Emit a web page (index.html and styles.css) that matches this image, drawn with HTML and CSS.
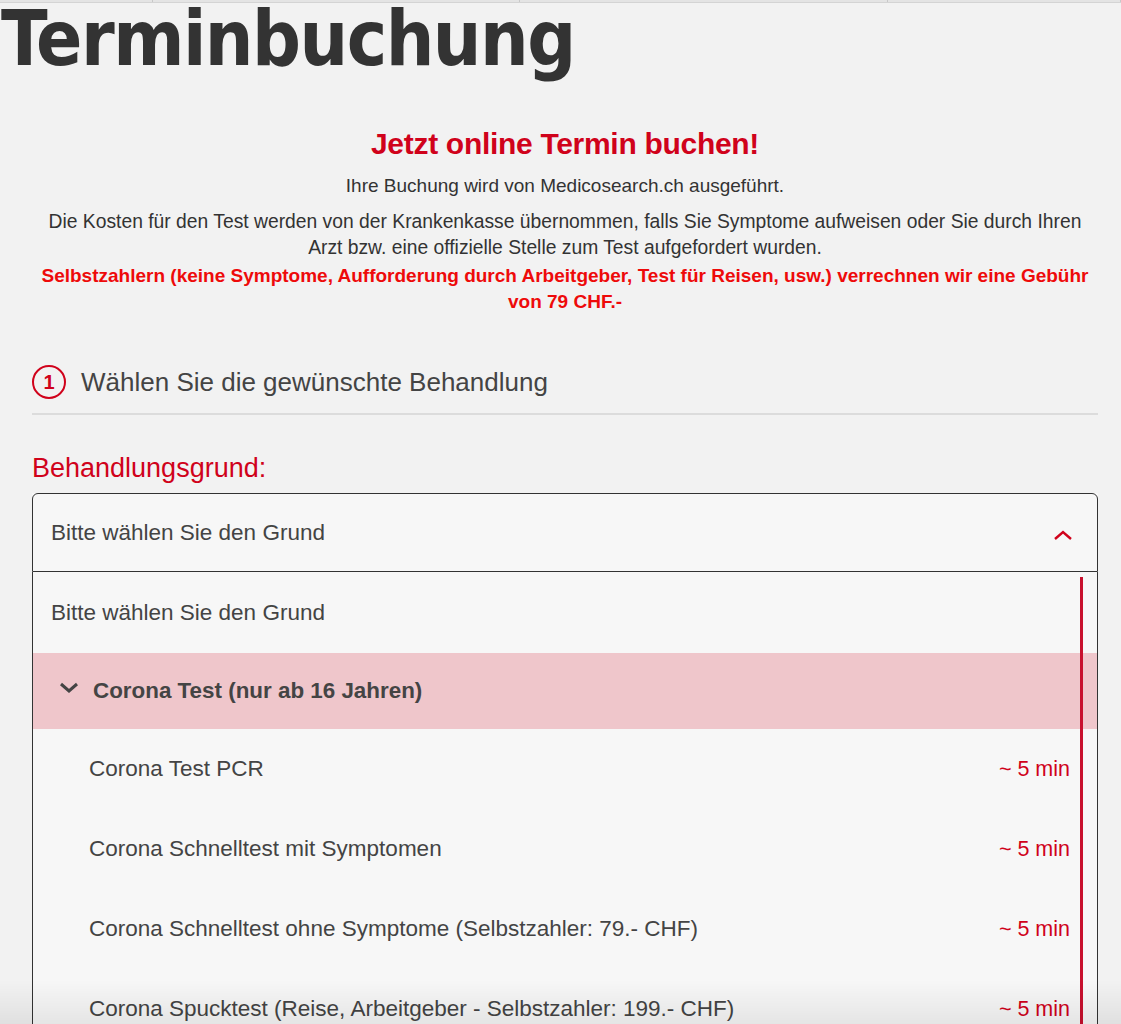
FILE: index.html
```html
<!DOCTYPE html>
<html lang="de">
<head>
<meta charset="utf-8">
<title>Terminbuchung</title>
<link rel="stylesheet" href="styles.css">
</head>
<body>
<div class="topstrip"><span></span><span></span><span></span><span></span></div>
<h1 class="title">Terminbuchung</h1>
<main class="content">
  <section class="intro">
    <h2 class="intro-head">Jetzt online Termin buchen!</h2>
    <p class="intro-line">Ihre Buchung wird von Medicosearch.ch ausgeführt.</p>
    <p class="intro-text">Die Kosten für den Test werden von der Krankenkasse übernommen, falls Sie Symptome aufweisen oder Sie durch Ihren Arzt bzw. eine offizielle Stelle zum Test aufgefordert wurden.<br><strong class="intro-warn">Selbstzahlern (keine Symptome, Aufforderung durch Arbeitgeber, Test für Reisen, usw.) verrechnen wir eine Gebühr von 79 CHF.-</strong></p>
  </section>
  <div class="step">
    <span class="step-num">1</span>
    <span class="step-title">Wählen Sie die gewünschte Behandlung</span>
  </div>
  <label class="field-label">Behandlungsgrund:</label>
  <div class="select">
    <div class="select-head">
      <span>Bitte wählen Sie den Grund</span>
      <svg class="chev-up" width="20" height="12" viewBox="0 0 20 12"><path d="M2 10 L10 3 L18 10" fill="none" stroke="#d0021b" stroke-width="2.4"/></svg>
    </div>
    <div class="dropdown">
      <div class="opt first">Bitte wählen Sie den Grund</div>
      <div class="opt group">
        <svg class="chev-down" width="20" height="12" viewBox="0 0 20 12"><path d="M2 2 L10 9 L18 2" fill="none" stroke="#444" stroke-width="3"/></svg>
        <span>Corona Test (nur ab 16 Jahren)</span>
      </div>
      <div class="opt item"><span>Corona Test PCR</span><span class="dur">~ 5 min</span></div>
      <div class="opt item"><span>Corona Schnelltest mit Symptomen</span><span class="dur">~ 5 min</span></div>
      <div class="opt item"><span>Corona Schnelltest ohne Symptome (Selbstzahler: 79.- CHF)</span><span class="dur">~ 5 min</span></div>
      <div class="opt item"><span>Corona Spucktest (Reise, Arbeitgeber - Selbstzahler: 199.- CHF)</span><span class="dur">~ 5 min</span></div>
      <div class="scrollbar"></div>
    </div>
  </div>
</main>
<div class="bottom-fade"></div>
</body>
</html>
```

FILE: styles.css
```css
html, body {
  margin: 0;
  padding: 0;
  height: 1024px;
  overflow: hidden;
}
body {
  background: #f2f2f2;
  font-family: "Liberation Sans", Arial, sans-serif;
  color: #333;
}
.topstrip {
  display: grid;
  grid-template-columns: 153px 367px 368px 1fr;
  height: 2px;
  background: #e4e4e4;
  border-bottom: 1px solid #d4d4d4;
}
.topstrip span {
  border-right: 1px solid #c8c8c8;
}
.title {
  margin: -2px 0 0;
  padding-left: 1px;
  font-family: "DejaVu Sans Condensed", "DejaVu Sans", sans-serif;
  font-weight: bold;
  font-size: 76px;
  line-height: 76px;
  letter-spacing: -1.5px;
  color: #333;
  height: 100px;
}
.content {
  padding: 0 23px 0 32px;
}
.intro {
  text-align: center;
  padding-top: 25px;
}
.intro-head {
  margin: 0;
  font-size: 30px;
  line-height: 36px;
  font-weight: bold;
  color: #d0021b;
  letter-spacing: -0.3px;
}
.intro-line {
  margin: 11px 0 0;
  font-size: 19px;
  line-height: 26px;
  color: #333;
}
.intro-text {
  margin: 10px 0 0;
  font-size: 19.3px;
  line-height: 26px;
  color: #333;
}
.intro-warn {
  display: inline-block;
  margin-top: 2px;
  font-size: 19px;
  color: #ee0a0a;
  font-weight: bold;
}
.step {
  display: flex;
  align-items: center;
  gap: 15px;
  margin-top: 50px;
  padding-bottom: 14px;
  border-bottom: 2px solid #dcdcdc;
}
.step-num {
  width: 30px;
  height: 30px;
  border: 2px solid #d0021b;
  border-radius: 50%;
  display: flex;
  align-items: center;
  justify-content: center;
  color: #d0021b;
  font-weight: bold;
  font-size: 20px;
}
.step-title {
  font-size: 26px;
  line-height: 34px;
  color: #444;
}
.field-label {
  display: block;
  margin-top: 37px;
  font-size: 27px;
  line-height: 32px;
  color: #d0021b;
}
.select {
  margin-top: 9px;
  background: #f7f7f7;
}
.select-head {
  height: 77px;
  border: 1px solid #333;
  border-radius: 6px 6px 0 0;
  display: flex;
  align-items: center;
  justify-content: space-between;
  padding: 0 24px 0 18px;
  font-size: 22.5px;
  color: #444;
}
.chev-up {
  margin-top: 4px;
}
.dropdown {
  position: relative;
  border-left: 1px solid #333;
  border-right: 1px solid #333;
  height: 480px;
}
.opt {
  height: 80px;
  display: flex;
  align-items: center;
  font-size: 22.5px;
  color: #444;
  padding-left: 18px;
}
.opt.first {
  height: 81px;
}
.group {
  height: 76px;
  background: #efc6cb;
  font-weight: bold;
  font-size: 22.4px;
  padding-left: 26px;
  gap: 14px;
}
.chev-down {
  margin-top: -6px;
}
.item {
  justify-content: space-between;
  padding-left: 56px;
  padding-right: 27px;
}
.dur {
  color: #d0021b;
  font-size: 21.5px;
}
.scrollbar {
  position: absolute;
  right: 14px;
  top: 5px;
  width: 3px;
  height: 480px;
  background: #c8102e;
}
.bottom-fade {
  position: fixed;
  left: 0;
  right: 0;
  bottom: 0;
  height: 44px;
  background: linear-gradient(to bottom, rgba(0,0,0,0), rgba(0,0,0,0.07));
  pointer-events: none;
}
```
